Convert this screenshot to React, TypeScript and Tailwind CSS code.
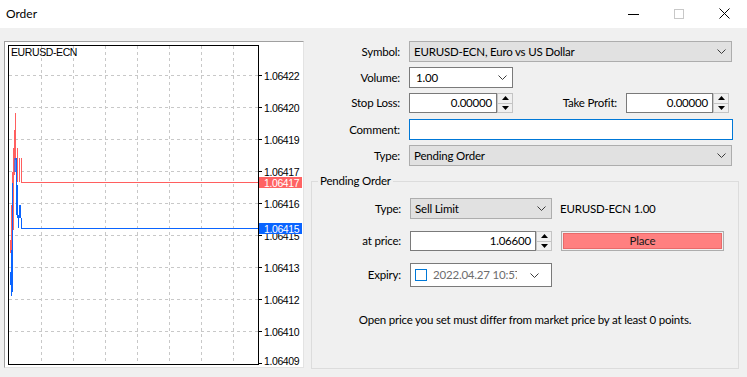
import React from "react";

const Chevron = () => (
  <svg width="9" height="5" viewBox="0 0 9 5" className="shrink-0">
    <polyline points="0.5,0.5 4.5,4.5 8.5,0.5" fill="none" stroke="#3c3c3c" strokeWidth="1" />
  </svg>
);

const Spinner = ({ h }: { h: number }) => (
  <div className="w-[16px] border border-[#c4c4c4] bg-[#f0f0f0] flex flex-col" style={{ height: h }}>
    <div className="flex-1 flex items-center justify-center border-b border-[#c4c4c4]">
      <svg width="7" height="4" viewBox="0 0 7 4"><polygon points="3.5,0 7,4 0,4" fill="#000" /></svg>
    </div>
    <div className="flex-1 flex items-center justify-center">
      <svg width="7" height="4" viewBox="0 0 7 4"><polygon points="0,0 7,0 3.5,4" fill="#000" /></svg>
    </div>
  </div>
);

const Label = ({ children }: { children: React.ReactNode }) => (
  <div className="w-[89px] text-right shrink-0 mr-[9px]">{children}</div>
);

const Chart = () => {
  const hs = [33, 65, 97, 129, 161, 193, 225, 257, 289];
  const labels = ["1.06422", "1.06420", "1.06419", "1.06417", "1.06416", "1.06415", "1.06413", "1.06412", "1.06410"];
  const vs = [36, 68, 100, 132, 164, 196, 228];
  const red: [number, number, number][] = [
    [10, 71, 118], [9, 88, 133], [8, 106, 188], [12, 106, 140], [14, 116, 140], [16, 116, 140],
    [7, 130, 213], [6, 163, 211], [5, 198, 211],
  ];
  const blue: [number, number, number][] = [
    [9.5, 116, 130], [10.5, 116, 130], [11, 116, 173], [12, 143, 176], [14, 163, 176], [15, 163, 176],
    [13, 173, 186], [16, 176, 186], [7, 141, 250], [6, 208, 254], [5, 230, 243],
  ];
  const font = { fontFamily: "'Liberation Sans', Arial, sans-serif", fontSize: 10.5, letterSpacing: -0.4 } as const;
  return (
    <svg width="298" height="325" viewBox="0 0 298 325" className="block">
      <rect x="0" y="0" width="298" height="325" fill="#fff" />
      {hs.map((y) => (
        <line key={"h" + y} x1="4" x2="253" y1={y + 0.5} y2={y + 0.5} stroke="#c8c8c8" strokeDasharray="3 3" />
      ))}
      {vs.map((x) => (
        <line key={"v" + x} x1={x + 0.5} x2={x + 0.5} y1="4" y2="322" stroke="#c8c8c8" strokeDasharray="3 3" />
      ))}
      {hs.map((y) => (
        <line key={"t" + y} x1="254" x2="257" y1={y + 0.5} y2={y + 0.5} stroke="#000" />
      ))}
      <line x1="254" x2="257" y1="321.5" y2="321.5" stroke="#000" />
      {hs.map((y, i) => (
        <text key={"l" + y} x="259" y={y + 4.5} fill="#000" {...font}>{labels[i]}</text>
      ))}
      <text x="259" y="322.5" fill="#000" {...font}>1.06409</text>
      {red.map(([x, a, b], i) => (
        <line key={"r" + i} x1={x + 0.5} x2={x + 0.5} y1={a} y2={b} stroke="#ff5f5f" />
      ))}
      <line x1="16" x2="253" y1="140.5" y2="140.5" stroke="#ff5f5f" />
      {blue.map(([x, a, b], i) => (
        <line key={"b" + i} x1={x + 0.5} x2={x + 0.5} y1={a} y2={b} stroke="#0a64ff" />
      ))}
      <line x1="16" x2="253" y1="186.5" y2="186.5" stroke="#0a64ff" />
      <rect x="254" y="135" width="43" height="11" fill="#ff6363" />
      <text x="259" y="144.5" fill="#fff" {...font}>1.06417</text>
      <rect x="254" y="181" width="43" height="11" fill="#0a64ff" />
      <text x="259" y="190.5" fill="#fff" {...font}>1.06415</text>
      <rect x="3.5" y="3.5" width="250" height="319" fill="none" stroke="#000" />
      <text x="6" y="14" fill="#000" {...font}>EURUSD-ECN</text>
    </svg>
  );
};

export default function App() {
  return (
    <div
      className="w-[747px] h-[377px] bg-[#f0f0f0] flex flex-col text-[11.5px] tracking-[-0.2px] text-black overflow-hidden"
      style={{ fontFamily: "Lato, 'Liberation Sans', sans-serif" }}
    >
      <div className="h-[28px] bg-white flex items-center shrink-0">
        <div className="pl-[6px] text-[12px] tracking-normal">Order</div>
        <div className="ml-auto flex items-center h-full">
          <svg width="12" height="12" viewBox="0 0 12 12" className="mr-[33px]"><line x1="0" x2="11" y1="6.5" y2="6.5" stroke="#000" /></svg>
          <svg width="12" height="12" viewBox="0 0 12 12" className="mr-[34px]"><rect x="1.5" y="1.5" width="9" height="9" fill="none" stroke="#c8c8c8" /></svg>
          <svg width="12" height="12" viewBox="0 0 12 12" className="mr-[16px]"><path d="M0.5 0.5 L10.5 10.5 M10.5 0.5 L0.5 10.5" stroke="#000" fill="none" /></svg>
        </div>
      </div>
      <div className="flex pl-[4px] pt-[13px]">
        <div className="w-[300px] h-[327px] border-t border-l border-[#a0a0a0] border-r-[#e3e3e3] border-b-[#e3e3e3] border-r border-b shrink-0">
          <Chart />
        </div>
        <div className="ml-[7px] w-[428px] flex flex-col">
          <div className="flex items-center h-[21px]">
            <Label>Symbol:</Label>
            <div className="w-[323px] h-[21px] bg-[#e1e1e1] border border-[#adadad] flex items-center pl-[4px] pr-[5px]">
              <span className="flex-1">EURUSD-ECN, Euro vs US Dollar</span>
              <Chevron />
            </div>
          </div>
          <div className="flex items-center h-[21px] mt-[5px]">
            <Label>Volume:</Label>
            <div className="w-[104px] h-[21px] bg-white border border-[#7a7a7a] flex items-center pl-[6px] pr-[5px]">
              <span className="flex-1">1.00</span>
              <Chevron />
            </div>
          </div>
          <div className="flex items-center h-[20px] mt-[5px]">
            <Label>Stop Loss:</Label>
            <div className="w-[88px] h-[20px] bg-white border border-[#7a7a7a] flex items-center justify-end pr-[4px]">0.00000</div>
            <Spinner h={20} />
            <div className="w-[104px] text-right mr-[9px]">Take Profit:</div>
            <div className="w-[87px] h-[20px] bg-white border border-[#7a7a7a] flex items-center justify-end pr-[4px]">0.00000</div>
            <Spinner h={20} />
          </div>
          <div className="flex items-center h-[21px] mt-[6px]">
            <Label>Comment:</Label>
            <div className="w-[324px] h-[21px] bg-white border border-[#0078d7]" />
          </div>
          <div className="flex items-center h-[21px] mt-[5px]">
            <Label>Type:</Label>
            <div className="w-[323px] h-[21px] bg-[#e1e1e1] border border-[#adadad] flex items-center pl-[4px] pr-[5px]">
              <span className="flex-1">Pending Order</span>
              <Chevron />
            </div>
          </div>
          <div className="relative mt-[15px] h-[188px] border border-[#dcdcdc] flex flex-col">
            <span className="absolute left-[6px] -top-[9px] bg-[#f0f0f0] px-[2px] leading-[16px]">Pending Order</span>
            <div className="flex items-center h-[21px] mt-[16px]">
              <Label>Type:</Label>
              <div className="w-[142px] h-[21px] bg-[#e1e1e1] border border-[#adadad] flex items-center pl-[4px] pr-[5px]">
                <span className="flex-1">Sell Limit</span>
                <Chevron />
              </div>
              <span className="ml-[8px]">EURUSD-ECN 1.00</span>
            </div>
            <div className="flex items-center h-[20px] mt-[12px]">
              <Label>at price:</Label>
              <div className="w-[126px] h-[20px] bg-white border border-[#7a7a7a] flex items-center justify-end pr-[4px]">1.06600</div>
              <Spinner h={20} />
              <div className="ml-[9px] w-[163px] h-[20px] border border-[#adadad] p-[1px]">
                <div className="w-full h-full bg-[#ff8080] border border-[#e86a6a] flex items-center justify-center text-[#1a1a1a]">Place</div>
              </div>
            </div>
            <div className="flex items-center h-[24px] mt-[12px]">
              <Label>Expiry:</Label>
              <div className="w-[142px] h-[24px] bg-white border border-[#7a7a7a] flex items-center pl-[4px]">
                <div className="w-[12px] h-[12px] border border-[#0078d7] shrink-0" />
                <span className="ml-[6px] w-[84px] overflow-hidden whitespace-nowrap text-[#6d6d6d]">2022.04.27 10:57:00</span>
                <span className="ml-[13px]"><Chevron /></span>
              </div>
            </div>
            <div className="mt-[24px] text-center">Open price you set must differ from market price by at least 0 points.</div>
          </div>
        </div>
      </div>
    </div>
  );
}
